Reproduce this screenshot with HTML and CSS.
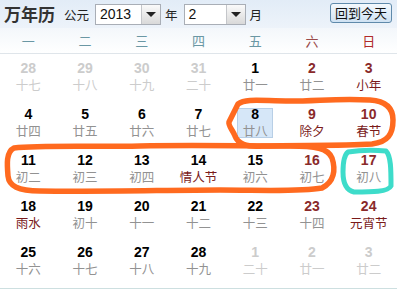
FILE: index.html
```html
<!DOCTYPE html>
<html lang="zh">
<head>
<meta charset="utf-8">
<link rel="stylesheet" href="styles.css">
</head>
<body>
<div class="cal">
  <div class="header">
    <span class="title">万年历</span>
    <span class="lbl era">公元</span>
    <div class="select year"><span class="val">2013</span><span class="drop"><i></i></span></div>
    <span class="lbl">年</span>
    <div class="select month"><span class="val">2</span><span class="drop"><i></i></span></div>
    <span class="lbl">月</span>
    <button class="today">回到今天</button>
  </div>
  <div class="weekdays">
    <span>一</span><span>二</span><span>三</span><span>四</span><span>五</span><span class="sat">六</span><span class="sun">日</span>
  </div>
  <div class="days">
    <div class="cell other"><div class="box"><b>28</b><span>十七</span></div></div>
    <div class="cell other"><div class="box"><b>29</b><span>十八</span></div></div>
    <div class="cell other"><div class="box"><b>30</b><span>十九</span></div></div>
    <div class="cell other"><div class="box"><b>31</b><span>二十</span></div></div>
    <div class="cell"><div class="box"><b>1</b><span>廿一</span></div></div>
    <div class="cell we"><div class="box"><b>2</b><span>廿二</span></div></div>
    <div class="cell we"><div class="box"><b>3</b><span class="fest">小年</span></div></div>

    <div class="cell"><div class="box"><b>4</b><span>廿四</span></div></div>
    <div class="cell"><div class="box"><b>5</b><span>廿五</span></div></div>
    <div class="cell"><div class="box"><b>6</b><span>廿六</span></div></div>
    <div class="cell"><div class="box"><b>7</b><span>廿七</span></div></div>
    <div class="cell sel"><div class="box"><b>8</b><span>廿八</span></div></div>
    <div class="cell we"><div class="box"><b>9</b><span class="fest">除夕</span></div></div>
    <div class="cell we"><div class="box"><b>10</b><span class="fest">春节</span></div></div>

    <div class="cell"><div class="box"><b>11</b><span>初二</span></div></div>
    <div class="cell"><div class="box"><b>12</b><span>初三</span></div></div>
    <div class="cell"><div class="box"><b>13</b><span>初四</span></div></div>
    <div class="cell"><div class="box"><b>14</b><span class="fest">情人节</span></div></div>
    <div class="cell"><div class="box"><b>15</b><span>初六</span></div></div>
    <div class="cell we"><div class="box"><b>16</b><span>初七</span></div></div>
    <div class="cell we"><div class="box"><b>17</b><span>初八</span></div></div>

    <div class="cell"><div class="box"><b>18</b><span class="fest">雨水</span></div></div>
    <div class="cell"><div class="box"><b>19</b><span>初十</span></div></div>
    <div class="cell"><div class="box"><b>20</b><span>十一</span></div></div>
    <div class="cell"><div class="box"><b>21</b><span>十二</span></div></div>
    <div class="cell"><div class="box"><b>22</b><span>十三</span></div></div>
    <div class="cell we"><div class="box"><b>23</b><span>十四</span></div></div>
    <div class="cell we"><div class="box"><b>24</b><span class="fest">元宵节</span></div></div>

    <div class="cell"><div class="box"><b>25</b><span>十六</span></div></div>
    <div class="cell"><div class="box"><b>26</b><span>十七</span></div></div>
    <div class="cell"><div class="box"><b>27</b><span>十八</span></div></div>
    <div class="cell"><div class="box"><b>28</b><span>十九</span></div></div>
    <div class="cell other"><div class="box"><b>1</b><span>二十</span></div></div>
    <div class="cell other"><div class="box"><b>2</b><span>廿一</span></div></div>
    <div class="cell other"><div class="box"><b>3</b><span>廿二</span></div></div>
  </div>
  <svg class="marks" width="397" height="292" viewBox="0 0 397 292">
    <path class="orange" d="M238 104 C246 98 262 101 290 101 C318 101 340 98 370 100 C386 101 393 108 393 120 C393 134 388 142 372 144 C340 146 300 145 262 146 C246 147 238 144 235 136 C233 130 228 126 229 122 C231 118 234 112 238 104 Z"/>
    <path class="orange" d="M14 148 C40 145 90 147 140 146 C190 145 240 146 290 146 C315 146 328 148 332 158 C336 170 334 182 322 188 C300 192 260 190 220 190 C170 190 100 192 40 191 C18 191 9 186 8 176 C7 164 6 152 14 148 Z"/>
    <path class="cyan" d="M348 152 C360 150 376 150 386 151 C391 156 391 170 391 186 C388 192 372 192 354 192 C345 190 343 182 343 172 C343 162 344 155 348 152 Z"/>
  </svg>
</div>
</body>
</html>
```

FILE: styles.css
```css
html, body {
  margin: 0;
  padding: 0;
  background: #ffffff;
}
body {
  font-family: "Liberation Sans", Arial, "Noto Sans CJK SC", sans-serif;
  width: 397px;
  height: 292px;
  overflow: hidden;
}
.cal {
  position: relative;
  width: 397px;
  height: 292px;
}
.header {
  height: 28px;
  display: flex;
  align-items: center;
  padding-left: 4px;
  box-sizing: border-box;
  background: linear-gradient(#e2ecf7, #edf3fa);
}
.title {
  font-family: "Noto Sans CJK SC", sans-serif;
  font-weight: bold;
  font-size: 17px;
  color: #333;
  line-height: 20px;
}
.lbl {
  font-family: "Noto Sans CJK SC", sans-serif;
  font-size: 12.5px;
  color: #222;
  margin: 0 5px 0 4px;
}
.era {
  margin-left: 9px;
}
.select {
  display: flex;
  height: 21px;
  box-sizing: border-box;
  border: 1px solid #a9aeb6;
  background: #fff;
  margin-left: 1px;
}
.select.year { width: 66px; }
.select.month { width: 62px; }
.select .val {
  flex: 1;
  font-size: 14px;
  line-height: 19px;
  padding-left: 4px;
  color: #111;
}
.select .drop {
  width: 18px;
  border-left: 1px solid #c4c6ca;
  background: linear-gradient(#fafafa, #d9d9d9);
  display: flex;
  align-items: center;
  justify-content: center;
}
.select .drop i {
  width: 0;
  height: 0;
  border-left: 5px solid transparent;
  border-right: 5px solid transparent;
  border-top: 5px solid #222;
}
.today {
  margin-left: auto;
  margin-right: 5px;
  height: 20px;
  padding: 0 4px;
  font-family: "Noto Sans CJK SC", sans-serif;
  font-size: 13px;
  line-height: 16px;
  color: #111;
  border: 1px solid #5f8aab;
  border-radius: 3px;
  background: linear-gradient(#f4f9fd, #cfe2f3);
  margin-top: -2px;
}
.weekdays {
  display: grid;
  grid-template-columns: repeat(7, 1fr);
  height: 26px;
  align-items: center;
  border-bottom: 1px solid #dfe5ea;
  background: linear-gradient(#f3f7fb, #ffffff);
  box-sizing: border-box;
}
.weekdays span {
  text-align: center;
  font-family: "Noto Sans CJK SC", sans-serif;
  font-size: 13px;
  color: #6a97a4;
}
.weekdays .sat { color: #9a4a4a; }
.weekdays .sun { color: #b02a2a; }
.days {
  display: grid;
  grid-template-columns: repeat(7, 1fr);
  grid-auto-rows: 46px;
  padding-bottom: 4px;
  border-bottom: 1px solid #cddfe0;
}
.cell {
  display: flex;
  align-items: center;
  justify-content: center;
}
.box {
  position: relative;
  isolation: isolate;
  width: 36px;
  height: 34px;
  display: flex;
  flex-direction: column;
  align-items: center;
}
.box b {
  font-family: "Liberation Sans", Arial, sans-serif;
  font-weight: bold;
  font-size: 14px;
  line-height: 16px;
  height: 16px;
  color: #000;
}
.box span {
  font-family: "Noto Sans CJK SC", sans-serif;
  font-size: 12.5px;
  line-height: 18px;
  height: 18px;
  color: #929292;
  white-space: nowrap;
}
.box span.fest { color: #7a1a1a; }
.cell.we b { color: #8a2a2a; }
.cell.other b,
.cell.other span { color: #cccccc; }
.cell.sel .box::before {
  content: "";
  position: absolute;
  left: 0;
  right: 0;
  top: 2px;
  bottom: 2px;
  background: #d6e7f8;
  border: 1px solid #b8cfe6;
  z-index: -1;
}
.marks {
  position: absolute;
  left: 0;
  top: 0;
  pointer-events: none;
}
.marks path {
  fill: none;
  stroke-width: 5.5;
  stroke-linecap: round;
  stroke-linejoin: round;
}
.marks .orange { stroke: #ff6a1f; }
.marks .cyan { stroke: #3edcca; stroke-width: 5; }
```
